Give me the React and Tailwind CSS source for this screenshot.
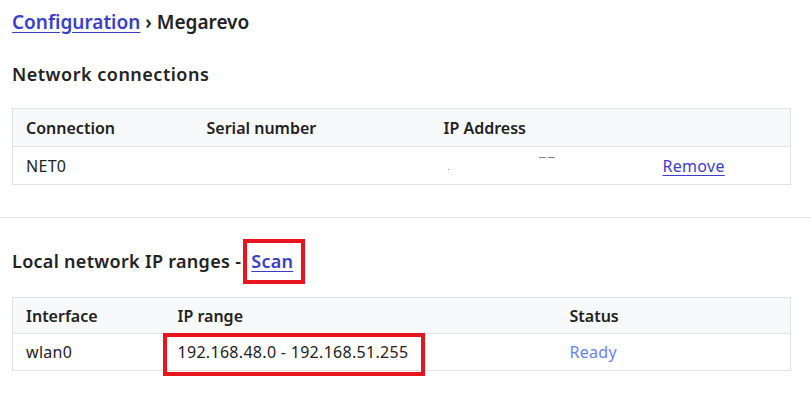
export default function App() {
  return (
    <div className="w-[811px] h-[414px] bg-white text-[#222] overflow-hidden" style={{ fontFamily: '"Noto Sans", "Open Sans", sans-serif' }}>
      <div className="px-3 pt-[8px]">
        <div className="text-[19px] font-semibold leading-[28px]">
          <a href="#" className="text-[#3b3ec8] underline underline-offset-[3px]">Configuration</a>
          <span> › Megarevo</span>
        </div>
        <div className="mt-[25px] text-[18px] font-semibold leading-[26px] tracking-[0.5px]">Network connections</div>
        <table className="mt-[21px] w-[779px] table-fixed border border-[#e2e2e2] border-collapse text-[16px]">
          <thead>
            <tr className="bg-[#f8f9fb] h-[38px] text-left">
              <th className="font-semibold pl-[13px] w-[194px]">Connection</th>
              <th className="font-semibold w-[237px]">Serial number</th>
              <th className="font-semibold w-[219px]">IP Address</th>
              <th></th>
            </tr>
          </thead>
          <tbody>
            <tr className="h-[38px] border-t border-[#e2e2e2] tracking-[0.3px]">
              <td className="pl-[13px]">NET0</td>
              <td></td>
              <td>
                <div className="relative h-[20px]">
                  <span className="absolute left-[4px] top-[13px] w-[1px] h-[1px] bg-[#999]"></span>
                  <span className="absolute left-[95px] top-[1px] w-[7px] h-[1px] bg-[#888]"></span>
                  <span className="absolute left-[104px] top-[1px] w-[7px] h-[1px] bg-[#888]"></span>
                </div>
              </td>
              <td>
                <a href="#" className="text-[#3b3ec8] underline underline-offset-[3px]">Remove</a>
              </td>
            </tr>
          </tbody>
        </table>
      </div>
      <div className="mt-[32px] border-t border-[#e4e4e4]"></div>
      <div className="px-3">
        <div className="mt-[21px] flex items-center text-[18px] font-semibold tracking-[0.3px]">
          <span>Local network IP ranges -</span>
          <span className="ml-[2px] inline-flex items-center h-[45px] border-[4px] border-[#e8141f] pl-[4px] pr-[8px]">
            <a href="#" className="text-[#3b3ec8] underline underline-offset-[3px]">Scan</a>
          </span>
        </div>
        <table className="mt-[13px] w-[779px] table-fixed border border-[#e2e2e2] border-collapse text-[16px]">
          <thead>
            <tr className="bg-[#f8f9fb] h-[36px] text-left">
              <th className="font-semibold pl-[13px] w-[165px]">Interface</th>
              <th className="font-semibold w-[392px]">IP range</th>
              <th className="font-semibold">Status</th>
            </tr>
          </thead>
          <tbody>
            <tr className="h-[37px] border-t border-[#e2e2e2] tracking-[0.3px]">
              <td className="pl-[13px]">wlan0</td>
              <td className="relative">
                <span>192.168.48.0 - 192.168.51.255</span>
                <span className="absolute left-[-15px] top-[-1px] w-[262px] h-[43px] border-[4px] border-[#e8141f]"></span>
              </td>
              <td className="text-[#6b82f0]">Ready</td>
            </tr>
          </tbody>
        </table>
      </div>
    </div>
  );
}
